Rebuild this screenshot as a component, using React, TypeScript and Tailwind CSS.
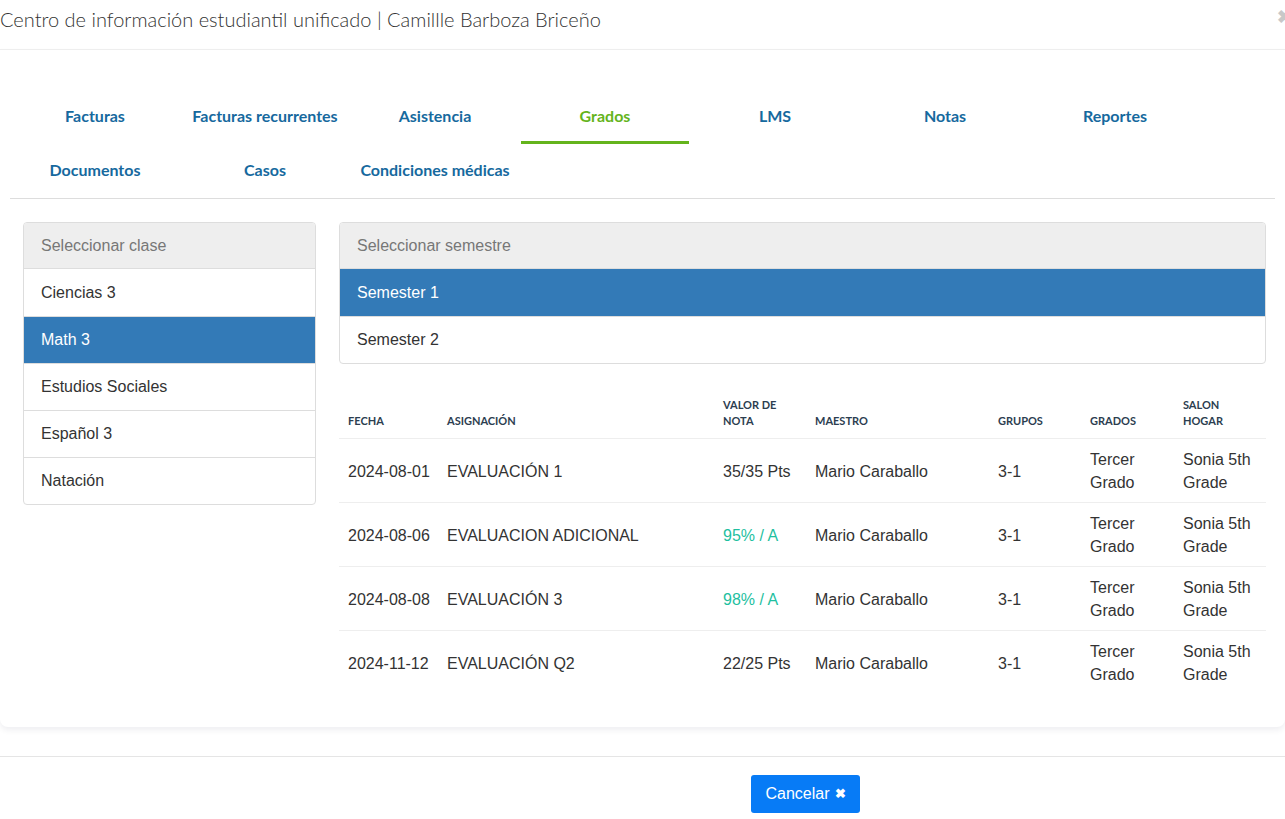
import React from "react";

const tabs = [
  "Facturas",
  "Facturas recurrentes",
  "Asistencia",
  "Grados",
  "LMS",
  "Notas",
  "Reportes",
  "Documentos",
  "Casos",
  "Condiciones médicas",
];

const classes = ["Ciencias 3", "Math 3", "Estudios Sociales", "Español 3", "Natación"];
const semesters = ["Semester 1", "Semester 2"];

interface Row {
  fecha: string;
  asignacion: string;
  valor: string;
  pct?: boolean;
}

const rows: Row[] = [
  { fecha: "2024-08-01", asignacion: "EVALUACIÓN 1", valor: "35/35 Pts" },
  { fecha: "2024-08-06", asignacion: "EVALUACION ADICIONAL", valor: "95% / A", pct: true },
  { fecha: "2024-08-08", asignacion: "EVALUACIÓN 3", valor: "98% / A", pct: true },
  { fecha: "2024-11-12", asignacion: "EVALUACIÓN Q2", valor: "22/25 Pts" },
];

const cols = "grid grid-cols-[99px_276px_92px_183px_92px_93px_92px]";

function ListPanel({ title, items, active }: { title: string; items: string[]; active: string }) {
  return (
    <div className="rounded-[4px] border border-[#ddd] overflow-hidden">
      <div className="h-[46px] bg-[#eee] border-b border-[#ddd] flex items-center px-[17px] text-[#777]">
        {title}
      </div>
      {items.map((it, i) => (
        <div
          key={it}
          className={`h-[47px] flex items-center px-[17px] ${
            i > 0 ? "border-t border-[#ddd]" : ""
          } ${it === active ? "bg-[#337ab7] text-white border-[#337ab7]" : "text-[#333]"}`}
        >
          {it}
        </div>
      ))}
    </div>
  );
}

export default function App() {
  return (
    <div className="min-h-[819px] bg-white font-['Liberation_Sans',Arial,sans-serif] text-[16px] text-[#333] overflow-hidden">
      {/* header */}
      <div className="relative h-[50px] border-b border-[#eee] pt-[7px]">
        <div className="font-['Lato',sans-serif] font-light text-[20px] leading-[24px] text-[#333]">
          Centro de información estudiantil unificado | Camillle Barboza Briceño
        </div>
        <span className="absolute right-[-7px] top-[4px] text-[18px] font-bold text-[#c8c8c8]">✖</span>
      </div>

      {/* card */}
      <div className="rounded-b-[8px] shadow-[0_3px_6px_rgba(20,20,60,0.07)] pt-[40px] pb-[33px]">
        <div className="mx-[10px] border-b border-[#ddd]">
          <div className="grid grid-cols-[repeat(7,170px)]">
            {tabs.map((t) => (
              <div
                key={t}
                className={`h-[54px] mx-[1px] flex items-center justify-center border-b-[3px] font-['Lato',sans-serif] font-bold text-[16px] ${
                  t === "Grados" ? "border-[#64b41c] text-[#64b41c]" : "border-transparent text-[#16699e]"
                }`}
              >
                {t}
              </div>
            ))}
          </div>
        </div>

        <div className="flex gap-[23px] pl-[23px] pr-[19px] pt-[23px]">
          <div className="w-[293px] shrink-0">
            <ListPanel title="Seleccionar clase" items={classes} active="Math 3" />
          </div>
          <div className="flex-1">
            <ListPanel title="Seleccionar semestre" items={semesters} active="Semester 1" />

            <div className="mt-[24px]">
              <div className={`${cols} items-end font-['Lato',sans-serif] font-bold text-[11px] leading-[16px] text-[#2c3e50] uppercase`}>
                {["Fecha", "Asignación", "Valor de nota", "Maestro", "Grupos", "Grados", "Salon hogar"].map((h) => (
                  <div key={h} className="px-[9px] py-[9px]">
                    {h === "Valor de nota" ? (
                      <>
                        Valor de
                        <br />
                        Nota
                      </>
                    ) : h === "Salon hogar" ? (
                      <>
                        Salon
                        <br />
                        Hogar
                      </>
                    ) : (
                      h
                    )}
                  </div>
                ))}
              </div>
              {rows.map((r) => (
                <div key={r.fecha} className={`${cols} items-center border-t border-[#eee] leading-[23px]`}>
                  <div className="px-[9px] pt-[9px] pb-[8px] whitespace-nowrap">{r.fecha}</div>
                  <div className="px-[9px] pt-[9px] pb-[8px] whitespace-nowrap">{r.asignacion}</div>
                  <div className={`px-[9px] pt-[9px] pb-[8px] whitespace-nowrap ${r.pct ? "text-[#1fbf9f]" : ""}`}>{r.valor}</div>
                  <div className="px-[9px] pt-[9px] pb-[8px]">Mario Caraballo</div>
                  <div className="px-[9px] pt-[9px] pb-[8px]">3-1</div>
                  <div className="px-[9px] pt-[9px] pb-[8px]">
                    Tercer
                    <br />
                    Grado
                  </div>
                  <div className="px-[9px] pt-[9px] pb-[8px]">
                    Sonia 5th
                    <br />
                    Grade
                  </div>
                </div>
              ))}
            </div>
          </div>
        </div>
      </div>

      {/* footer */}
      <div className="mt-[29px] border-t border-[#e5e5e5] pt-[18px] pl-[751px]">
        <button className="h-[38px] w-[109px] rounded-[3px] bg-[#077bf6] text-white flex items-center justify-center gap-[5px]">
          Cancelar <span className="text-[13px] font-bold">✖</span>
        </button>
      </div>
    </div>
  );
}
